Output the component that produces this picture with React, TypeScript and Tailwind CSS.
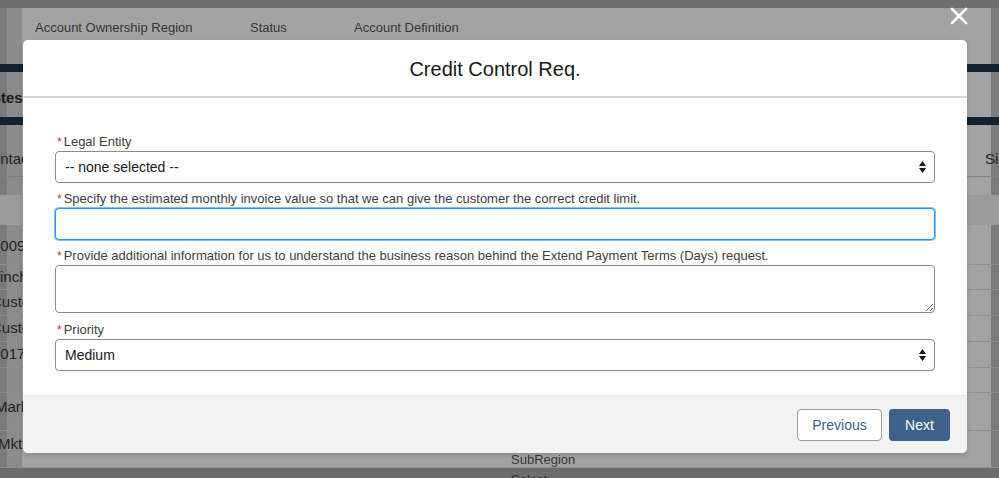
import { type ReactNode } from 'react'

/**
 * Credit Control Req. — modal step over a dimmed account record page.
 * Background page colours are painted already dimmed (as seen under the scrim).
 */

const font = "font-['Liberation_Sans','Helvetica_Neue',Arial,sans-serif]"

function Label({ children }: { children: ReactNode }) {
  return (
    <div className="flex items-center h-[18px] text-[13px] leading-[18px] text-[#3e3e3c] pl-[2px]">
      <span className="text-[#c23934] mr-[2px] text-[12px]">*</span>
      {children}
    </div>
  )
}

function Arrows() {
  return (
    <span className="pointer-events-none absolute right-[9px] top-1/2 -translate-y-1/2 flex flex-col items-center gap-[2px]">
      <svg width="7" height="5" viewBox="0 0 7 5"><path d="M3.5 0L7 5H0z" fill="#1a1a1a" /></svg>
      <svg width="7" height="5" viewBox="0 0 7 5"><path d="M0 0h7L3.5 5z" fill="#1a1a1a" /></svg>
    </span>
  )
}

function SelectBox({ value }: { value: string }) {
  return (
    <div className="relative">
      <div className="h-[32px] rounded-[4px] border border-[#8c8c8c] bg-white flex items-center pl-[9px] text-[14px] text-[#181818]">
        {value}
      </div>
      <Arrows />
    </div>
  )
}

function Row({ h, text, offset, line = true }: { h: string; text?: string; offset?: string; line?: boolean }) {
  return (
    <div className={`${h} shrink-0 flex items-center ${line ? 'border-b border-[#8f8f8f]' : ''}`}>
      {text ? <span className={`${offset} whitespace-nowrap text-[15px] text-[#222]`}>{text}</span> : null}
    </div>
  )
}

function Page() {
  return (
    <div className="h-full flex flex-col bg-[#6d6d6d] pt-[8px]">
      <div className="h-[460px] shrink-0 flex flex-col overflow-hidden bg-[linear-gradient(to_right,#7a7a7a_7px,#8c8c8c_7px,#8c8c8c_22px,#a3a3a3_22px,#a3a3a3_991px,#7b7b7b_991px)]">
        {/* record header */}
        <div className="h-[56px] shrink-0 flex pl-[35px] pt-[11px] text-[13px] leading-[17px] text-[#363636]">
          <div className="w-[215px]">
            <div>Account Ownership Region</div>
            <div>EMEA</div>
          </div>
          <div className="w-[104px]">
            <div>Status</div>
            <div>Active</div>
          </div>
          <div>
            <div>Account Definition</div>
            <div>Self-managed</div>
          </div>
        </div>
        <div className="h-[8px] shrink-0 bg-[#14222f]" />
        <div className="h-[45px] shrink-0 flex items-end pb-[10px]">
          <span className="-ml-[19px] text-[15px] leading-[18px] font-bold text-[#1c1c1c]">Notes</span>
        </div>
        <div className="h-[8px] shrink-0 bg-[#14222f]" />
        <div className="h-[52px] shrink-0 flex items-center justify-between border-b border-[#808080] pt-[18px]">
          <span className="-ml-[19px] text-[15px] text-[#222]">Contact</span>
          <span className="w-[14px] text-[15px] text-[#222] whitespace-nowrap">Sign</span>
        </div>
        <div className="h-[18px] shrink-0" />
        <div className="h-[30px] shrink-0 bg-[#9b9b9b]" />
        <Row h="h-[40px]" text="2009" offset="-ml-[8px] mt-[4px]" />
        <Row h="h-[25px]" text="Pinch" offset="-ml-[10px]" />
        <Row h="h-[26px]" text="Customer" offset="-ml-[9px]" />
        <Row h="h-[26px]" text="Customer" offset="-ml-[9px]" />
        <Row h="h-[26px]" text="2017" offset="-ml-[8px]" />
        <Row h="h-[25px]" />
        <Row h="h-[38px]" text="Market" offset="-ml-[5px] -mt-[8px]" />
        <Row h="h-[24px]" text="Mkt Dev" offset="-ml-[2px] mt-[2px]" line={false} />
        <div className="h-[13px] shrink-0 flex items-start pl-[511px] border-b border-[#8f8f8f]">
          <span className="text-[13px] leading-[13px] text-[#363636] -mt-[2px]">SubRegion</span>
        </div>
      </div>
      <div className="flex-1 pl-[511px] overflow-hidden">
        <span className="block text-[13px] leading-[13px] text-[#2a2a2a] mt-[5px]">Select</span>
      </div>
    </div>
  )
}

export default function App() {
  return (
    <div className={`relative w-[999px] h-[478px] overflow-hidden ${font}`}>
      <Page />

      {/* close */}
      <button className="absolute left-[950px] top-[7px] w-[18px] h-[18px]" aria-label="Close">
        <svg width="18" height="18" viewBox="0 0 18 18">
          <path d="M2 2L16 16M16 2L2 16" stroke="#fff" strokeWidth="2.6" strokeLinecap="round" />
        </svg>
      </button>

      {/* modal */}
      <div className="absolute left-[23px] top-[40px] w-[944px] rounded-[5px] bg-white overflow-hidden shadow-[0_2px_4px_rgba(0,0,0,0.15)]">
        <div className="h-[58px] flex items-center justify-center border-b-2 border-[#d6d6d6]">
          <h2 className="text-[20px] text-[#181818] mt-[2px]">Credit Control Req.</h2>
        </div>

        <div className="px-[32px] pt-[35px] pb-[24px] flex flex-col">
          <Label>Legal Entity</Label>
          <SelectBox value="-- none selected --" />

          <div className="mt-[7px]">
            <Label>Specify the estimated monthly invoice value so that we can give the customer the correct credit limit.</Label>
          </div>
          <input
            className="h-[32px] rounded-[4px] border border-[#1b96ff] shadow-[0_0_0_1px_#7cc0ff] outline-none bg-white px-[9px]"
            aria-label="Estimated monthly invoice value"
          />

          <div className="mt-[7px]">
            <Label>Provide additional information for us to understand the business reason behind the Extend Payment Terms (Days) request.</Label>
          </div>
          <textarea
            className="h-[48px] rounded-[4px] border border-[#8c8c8c] bg-white outline-none resize-y block"
            aria-label="Additional information"
          />

          <div className="mt-[8px]">
            <Label>Priority</Label>
          </div>
          <SelectBox value="Medium" />
        </div>

        <div className="h-[58px] bg-[#f3f3f3] border-t border-[#e5e5e5] flex items-start justify-end gap-[7px] pr-[17px] pt-[13px]">
          <button className="h-[32px] w-[85px] rounded-[4px] border border-[#9a9a9a] bg-white text-[14px] text-[#3a5e85]">
            Previous
          </button>
          <button className="h-[32px] w-[61px] rounded-[4px] bg-[#3e6189] text-[14px] text-white">
            Next
          </button>
        </div>
      </div>
    </div>
  )
}
